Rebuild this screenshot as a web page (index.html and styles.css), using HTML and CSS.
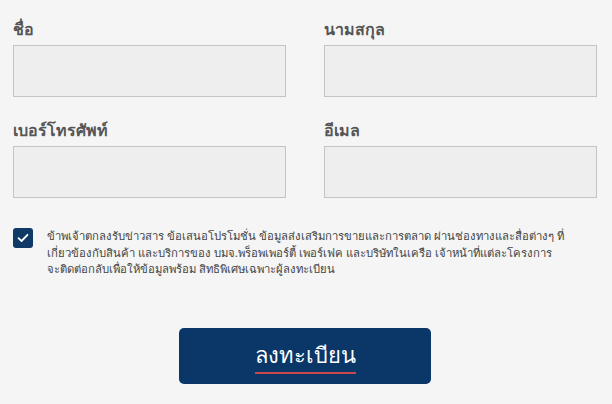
FILE: index.html
```html
<!DOCTYPE html>
<html lang="th">
<head>
    <meta charset="UTF-8">
    <meta name="viewport" content="width=device-width, initial-scale=1.0">
    <link rel="stylesheet" href="styles.css">
    <title>ลงทะเบียน</title>
</head>
<body>
    <form class="register-form">
        <div class="field-grid">
            <div class="field">
                <label class="field-label" for="firstName">ชื่อ</label>
                <input class="field-input" id="firstName" type="text">
            </div>
            <div class="field">
                <label class="field-label" for="lastName">นามสกุล</label>
                <input class="field-input" id="lastName" type="text">
            </div>
            <div class="field">
                <label class="field-label" for="phone">เบอร์โทรศัพท์</label>
                <input class="field-input" id="phone" type="text">
            </div>
            <div class="field">
                <label class="field-label" for="email">อีเมล</label>
                <input class="field-input" id="email" type="text">
            </div>
        </div>
        <label class="consent">
            <span class="check-box">
                <svg width="12" height="10" viewBox="0 0 12 10">
                    <path d="M1.5 5.2 L4.5 8 L10.5 1.8" fill="none" stroke="#fff" stroke-width="1.8" stroke-linecap="round" stroke-linejoin="round"/>
                </svg>
            </span>
            <span class="consent-text">ข้าพเจ้าตกลงรับข่าวสาร ข้อเสนอโปรโมชั่น ข้อมูลส่งเสริมการขายและการตลาด ผ่านช่องทางและสื่อต่างๆ ที่<br>เกี่ยวข้องกับสินค้า และบริการของ บมจ.พร็อพเพอร์ตี้ เพอร์เฟค และบริษัทในเครือ เจ้าหน้าที่แต่ละโครงการ<br>จะติดต่อกลับเพื่อให้ข้อมูลพร้อม สิทธิพิเศษเฉพาะผู้ลงทะเบียน</span>
        </label>
        <div class="submit-row">
            <button class="submit-btn" type="button"><span class="submit-text">ลงทะเบียน</span></button>
        </div>
    </form>
</body>
</html>
```

FILE: styles.css
```css
body {
    margin: 0;
    padding: 0;
    background-color: #f5f5f5;
    font-family: "Noto Sans", "DejaVu Sans", sans-serif;
}

.register-form {
    padding: 18px 15px 0 13px;
}

.field-grid {
    display: grid;
    grid-template-columns: 273px 273px;
    column-gap: 38px;
    row-gap: 22px;
}

.field {
    display: flex;
    flex-direction: column;
}

.field-label {
    color: #555555;
    font-size: 16px;
    font-weight: bold;
    line-height: 22px;
    margin-bottom: 5px;
}

.field-input {
    box-sizing: border-box;
    height: 52px;
    width: 100%;
    margin: 0;
    background-color: #eeeeee;
    border: 1px solid #c4c4c4;
    border-radius: 0;
}

.consent {
    display: flex;
    align-items: flex-start;
    gap: 14px;
    margin-top: 28px;
}

.check-box {
    flex: none;
    display: flex;
    align-items: center;
    justify-content: center;
    width: 20px;
    height: 20px;
    margin-top: 2px;
    border-radius: 3px;
    background-color: #0f3a68;
}

.consent-text {
    color: #444444;
    font-size: 11.3px;
    line-height: 16.5px;
    width: 545px;
    padding-top: 2px;
}

.submit-row {
    display: flex;
    justify-content: center;
    margin-top: 50px;
}

.submit-btn {
    width: 252px;
    height: 56px;
    border: none;
    border-radius: 5px;
    background-color: #0a3668;
    cursor: pointer;
}

.submit-text {
    color: #ffffff;
    font-family: inherit;
    font-size: 22px;
    font-weight: 300;
    padding-bottom: 4px;
    border-bottom: 2px solid #c9464f;
}
```
